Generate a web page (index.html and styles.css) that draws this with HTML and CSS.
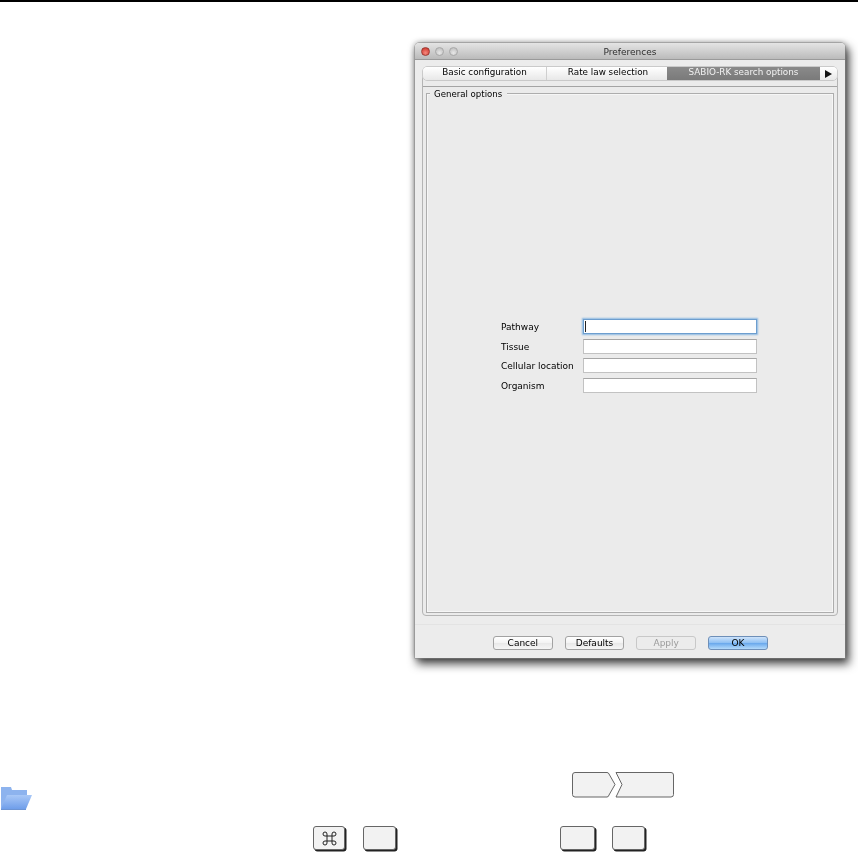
FILE: index.html
```html
<!DOCTYPE html>
<html lang="en">
<head>
<meta charset="utf-8">
<title>Preferences</title>
<link rel="stylesheet" href="styles.css">
</head>
<body>
<div class="rule"></div>
<section class="window">
  <header class="titlebar">
    <div class="lights"><i class="light red"></i><i class="light"></i><i class="light"></i></div>
    <div class="title">Preferences</div>
  </header>
  <div class="tabs">
    <div class="tab t1">Basic configuration</div>
    <div class="tab t2">Rate law selection</div>
    <div class="tab t3 active">SABIO-RK search options</div>
    <div class="tab t4"><svg width="7" height="8" viewBox="0 0 7 8"><path d="M0 0L7 4L0 8Z" fill="#111"/></svg></div>
  </div>
  <div class="pane">
    <div class="well">
      <div class="group">
        <span class="legend">General options</span>
        <div class="form">
          <label class="lbl">Pathway</label><div class="field focus"><i class="caret"></i></div>
          <label class="lbl">Tissue</label><div class="field"></div>
          <label class="lbl">Cellular location</label><div class="field"></div>
          <label class="lbl">Organism</label><div class="field"></div>
        </div>
      </div>
    </div>
  </div>
  <div class="buttons">
    <div class="btn">Cancel</div>
    <div class="btn">Defaults</div>
    <div class="btn off">Apply</div>
    <div class="btn ok">OK</div>
  </div>
</section>
<div class="menu-row">
  <svg class="folder" width="33" height="25" viewBox="0 0 33 25">
    <defs><linearGradient id="fg" x1="0" y1="0" x2="0" y2="1"><stop offset="0" stop-color="#a9c8f7"/><stop offset="1" stop-color="#6f9eea"/></linearGradient></defs>
    <path d="M1 2H11L12 5H27V11H8L3 24H1Z" fill="#8db3ee"/>
    <path d="M7 10H32L26 24H1Z" fill="url(#fg)"/>
    <path d="M1 24.500H26" stroke="#6c94d4" stroke-width="1"/>
  </svg>
  <svg class="crumbs" width="102" height="26" viewBox="0 0 102 26">
    <path d="M3 .5H35Q36.500 .5 37 2L43 12.500L37 23Q36.500 25 35 25H3Q.5 25 .5 22.500V3Q.5 .5 3 .5Z" fill="#f2f2f2" stroke="#666"/>
    <path d="M44 .5H99Q101.500 .5 101.500 3V22.500Q101.500 25 99 25H44L50 12.500Z" fill="#f2f2f2" stroke="#666"/>
  </svg>
</div>
<div class="keys">
  <div class="key cmd"><svg width="15" height="15" viewBox="0 0 15 15" fill="none" stroke="#222" stroke-width="1"><path d="M5 5H10V10H5ZM5 5V3A2 2 0 1 0 3 5H5M10 5H12A2 2 0 1 0 10 3V5M10 10V12A2 2 0 1 0 12 10H10M5 10H3A2 2 0 1 0 5 12V10"/></svg></div>
  <div class="key k2"></div>
  <div class="key k3"></div>
  <div class="key k4"></div>
</div>
</body>
</html>
```
FILE: styles.css
```css
html, body { margin: 0; padding: 0; background: #fff; }
body { width: 858px; height: 853px; overflow: hidden; font-family: "DejaVu Sans", sans-serif; font-size: 9px; color: #000; }
.rule { height: 2px; background: #000; }
.window {
  width: 430px; height: 615px; margin: 41px 0 0 415px;
  display: flex; flex-direction: column; background: #ececec;
  border-radius: 4px 4px 0 0;
  box-shadow: 0 0 0 .5px #8a8a8a, 3px 5px 10px 1px rgba(0,0,0,.72), 0 0 6px rgba(0,0,0,.35);
  filter: blur(.3px);
}
.titlebar {
  height: 14px; padding-top: 2px; flex: none; position: relative; display: flex; align-items: center; justify-content: center;
  background: linear-gradient(#e4e4e4, #bbb); border-bottom: 1px solid #9a9a9a; border-radius: 4px 4px 0 0;
}
.title { color: #2e2e2e; }
.lights { position: absolute; left: 6px; top: 4px; display: flex; gap: 5px; }
.light { width: 9px; height: 9px; border-radius: 50%; background: radial-gradient(circle at 50% 70%, #e8e8e8, #b8b8b8); border: 1px solid #a8a8a8; box-sizing: border-box; }
.light.red { background: radial-gradient(circle at 50% 70%, #f6897e, #c92a20); border-color: #9c3a33; }
.tabs {
  display: flex; height: 13px; margin: 7px 0 0 8px; width: 414px; flex: none; position: relative; z-index: 1; font-size: 8.8px; line-height: 11px;
  background: linear-gradient(#fff, #e8e8e8); border-radius: 4px; box-shadow: 0 0 0 .5px #a8a8a8;
}
.tab { display: flex; align-items: flex-start; justify-content: center; box-sizing: border-box; }
.t1 { width: 124px; border-right: 1px solid #cfcfcf; }
.t2 { width: 120px; padding-left: 2px; }
.t3 { width: 153px; }
.t4 { flex: 1; align-items: center; }
.active { background: linear-gradient(#8a8a8a, #7a7a7a); color: #f2f2f2; }
.pane {
  margin: -5px 7px 0 7px; flex: none; height: 541px; box-sizing: border-box;
  border: 1px solid #b4b4b4; border-radius: 4px; padding-top: 10px; background: #ebebeb;
}
.well { height: 100%; box-sizing: border-box; border-top: 1px solid #a4a4a4; padding: 6px 3px 2px; }
.group { height: 100%; box-sizing: border-box; border: 1px solid #adadad; position: relative; display: flex; align-items: center; justify-content: center; box-shadow: 0 0 0 1px #f6f6f6 inset; }
.legend { position: absolute; left: 3px; top: -6px; background: #ebebeb; padding: 0 5px 0 4px; line-height: 12px; font-size: 8.6px; }
.form { display: grid; grid-template-columns: 82px 174px; row-gap: 4.67px; align-items: center; margin: 6px 0 0 -2px; }
.lbl { padding-top: 1px; }
.field { height: 15px; box-sizing: border-box; background: #fff; border: 1px solid #c2c2c2; border-top-color: #a6a6a6; display: flex; align-items: center; }
.focus { border: 1px solid #6d9ecf; box-shadow: 0 0 1.500px 1px #8db9e2; }
.caret { width: 1px; height: 11px; background: #222; margin-left: 1px; }
.buttons { display: flex; gap: 12px; margin-top: 8px; border-top: 1px solid #e3e3e3; padding: 11px 0 0 78px; }
.btn {
  width: 59.7px; height: 14px; box-sizing: border-box; border: 1px solid #a2a2a2; border-radius: 3px;
  background: linear-gradient(#fff 0%, #f3f3f3 50%, #e8e8e8 51%, #f6f6f6 100%);
  display: flex; align-items: center; justify-content: center;
}
.off { color: #9b9b9b; border-color: #c8c8c8; background: #ececec; }
.ok { background: linear-gradient(#cde3fb 0%, #8fc0f3 48%, #69a8ec 52%, #b4dafb 100%); border-color: #6e8fb8; }
.menu-row { display: flex; justify-content: space-between; align-items: flex-start; height: 40px; margin-top: 114px; padding: 0 184px 0 0; }
.folder { margin: 13px 0 0 0; }
.keys { display: flex; margin-top: 14px; height: 27px; padding-left: 313px; }
.key {
  width: 33px; height: 24px; box-sizing: border-box; background: #f2f2f2; border: 1px solid #666; border-radius: 3px;
  box-shadow: 1.500px 1.500px 0 #222; display: flex; align-items: center; justify-content: center;
}
.cmd { width: 32px; }
.k2 { margin-left: 18px; }
.k3 { margin-left: 164px; width: 35px; }
.k4 { margin-left: 17px; }
```
